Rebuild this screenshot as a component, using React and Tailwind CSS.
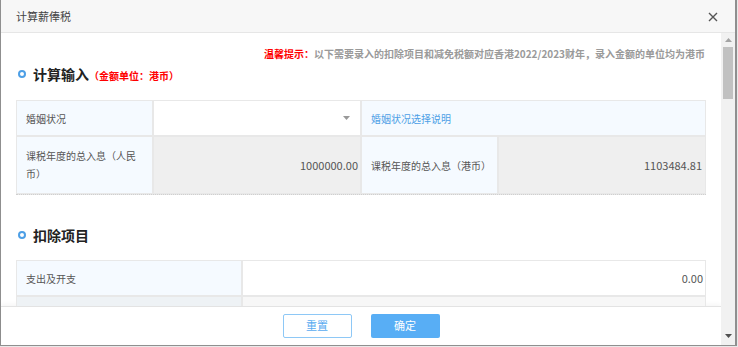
export default function App() {
  return (
    <div className="w-[738px] h-[347px] bg-[#e9e9e9] font-['Noto_Sans_CJK_SC',sans-serif] overflow-hidden">
      <div className="w-[737px] h-[346px] bg-white border-l border-r-2 border-b border-[#8f8f8f] flex flex-col">
        {/* header */}
        <div className="h-[33px] shrink-0 bg-[#f7f7f7] border-b border-[#e6e6e6] flex items-center justify-between pl-[15px] pr-[17px]">
          <span className="text-[11px] text-[#444]">计算薪俸税</span>
          <svg width="10" height="10" viewBox="0 0 10 10" className="mt-[1px]">
            <path d="M1 1 L9 9 M9 1 L1 9" stroke="#555" strokeWidth="1.4" />
          </svg>
        </div>
        <div className="flex flex-1 min-h-0">
          {/* left column */}
          <div className="flex-1 flex flex-col min-w-0">
            <div className="h-[273px] overflow-hidden px-[15px] pt-[14px] relative">
              <div className="text-right text-[10px] leading-[14px] font-bold text-[#9a9a9a] pr-[1px]">
                <span className="text-[#ff0000]">温馨提示：</span>以下需要录入的扣除项目和减免税额对应香港2022/2023财年，录入金额的单位均为港币
              </div>
              <div className="mt-[3px] h-[20px] flex items-center">
                <span className="ml-[2px] w-[8px] h-[8px] rounded-full border-2 border-[#4d9fe6]"></span>
                <span className="ml-[7px] text-[14px] font-bold text-[#222]">计算输入</span>
                <span className="text-[10px] font-bold text-[#ff0000] mt-[2px]">（金额单位：港币）</span>
              </div>
              {/* table 1 */}
              <div className="mt-[16px] bg-[#e8e8e8] p-[1px] grid grid-cols-[135px_206px_135px_206px] grid-rows-[34px_56px] gap-[2px] text-[10px] text-[#555] border-b border-dotted border-[#cfcfcf]">
                <div className="bg-[#f5faff] flex items-center px-[9px]">婚姻状况</div>
                <div className="bg-white flex items-center justify-end pr-[10px]">
                  <svg width="7" height="4" viewBox="0 0 7 4"><path d="M0 0 L7 0 L3.5 4 Z" fill="#999" /></svg>
                </div>
                <div className="col-span-2 bg-[#f5faff] flex items-center px-[9px] text-[#4d9fe6]">婚姻状况选择说明</div>
                <div className="bg-[#f5faff] flex items-center px-[9px] leading-[18px]">课税年度的总入息（人民币）</div>
                <div className="bg-[#efefef] flex items-center justify-end pr-[2px] text-[11px]">1000000.00</div>
                <div className="bg-[#f5faff] flex items-center px-[9px]">课税年度的总入息（港币）</div>
                <div className="bg-[#efefef] flex items-center justify-end pr-[3px] text-[11px]">1103484.81</div>
              </div>
              <div className="mt-[30px] h-[20px] flex items-center">
                <span className="ml-[2px] w-[8px] h-[8px] rounded-full border-2 border-[#4d9fe6]"></span>
                <span className="ml-[7px] text-[14px] font-bold text-[#222]">扣除项目</span>
              </div>
              {/* table 2 */}
              <div className="mt-[15px] bg-[#e8e8e8] p-[1px] grid grid-cols-[224px_462px] grid-rows-[34px_34px] gap-[2px] text-[10px] text-[#555]">
                <div className="bg-[#f5faff] flex items-center px-[9px]">支出及开支</div>
                <div className="bg-white flex items-center justify-end pr-[2px] text-[11px]">0.00</div>
                <div className="bg-[#eef2f5] flex items-center px-[9px]"></div>
                <div className="bg-[#f7f7f7] flex items-center justify-end pr-[2px]"></div>
              </div>
            </div>
            {/* footer */}
            <div className="h-[38px] shrink-0 border-t border-[#e3e3e3] bg-white flex items-center justify-center gap-[19px] shadow-[0_-2px_4px_rgba(0,0,0,0.04)]">
              <button className="w-[69px] h-[24px] rounded-[2px] border border-[#8ec8f6] bg-white text-[11px] text-[#5aacf0]">重置</button>
              <button className="w-[69px] h-[24px] rounded-[2px] bg-[#58aef5] text-[11px] text-white">确定</button>
            </div>
          </div>
          {/* scrollbar */}
          <div className="w-[14px] shrink-0 bg-[#f1f1f1] flex flex-col items-center">
            <div className="h-[14px] flex items-center justify-center">
              <svg width="7" height="4" viewBox="0 0 7 4"><path d="M0 4 L7 4 L3.5 0 Z" fill="#a3a3a3" /></svg>
            </div>
            <div className="w-[10px] h-[52px] bg-[#c1c1c1]"></div>
            <div className="flex-1"></div>
            <div className="h-[14px] flex items-center justify-center mb-[2px]">
              <svg width="7" height="4" viewBox="0 0 7 4"><path d="M0 0 L7 0 L3.5 4 Z" fill="#505050" /></svg>
            </div>
          </div>
        </div>
      </div>
    </div>
  );
}
